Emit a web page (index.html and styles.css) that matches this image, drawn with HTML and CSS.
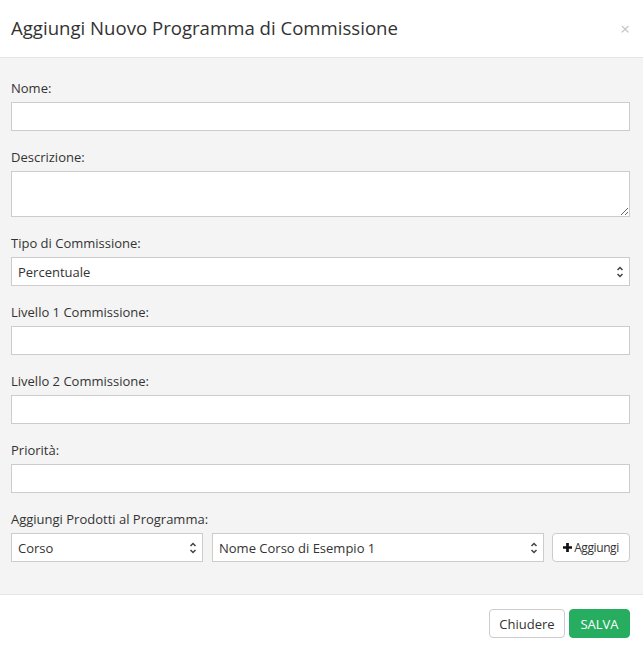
FILE: index.html
```html
<!DOCTYPE html>
<html lang="it">
<head>
<meta charset="utf-8">
<title>Aggiungi Nuovo Programma di Commissione</title>
<link rel="stylesheet" href="styles.css">
</head>
<body>
<div class="modal">
  <div class="modal-header">
    <h4 class="modal-title">Aggiungi Nuovo Programma di Commissione</h4>
    <button class="close" type="button">&times;</button>
  </div>
  <div class="modal-body">
    <div class="form-group">
      <label class="label">Nome:</label>
      <input class="control" type="text">
    </div>
    <div class="form-group">
      <label class="label">Descrizione:</label>
      <textarea class="control textarea"></textarea>
    </div>
    <div class="form-group">
      <label class="label">Tipo di Commissione:</label>
      <select class="control select"><option>Percentuale</option></select>
    </div>
    <div class="form-group">
      <label class="label">Livello 1 Commissione:</label>
      <input class="control" type="text">
    </div>
    <div class="form-group">
      <label class="label">Livello 2 Commissione:</label>
      <input class="control" type="text">
    </div>
    <div class="form-group">
      <label class="label">Priorità:</label>
      <input class="control" type="text">
    </div>
    <div class="form-group">
      <label class="label">Aggiungi Prodotti al Programma:</label>
      <div class="product-row">
        <select class="control select type-select"><option>Corso</option></select>
        <select class="control select item-select"><option>Nome Corso di Esempio 1</option></select>
        <button class="btn btn-add" type="button"><svg class="plus" viewBox="0 0 10 10" width="9" height="9"><path d="M3.5 0h3v3.5H10v3H6.5V10h-3V6.5H0v-3h3.5z" fill="#111"/></svg>Aggiungi</button>
      </div>
    </div>
  </div>
  <div class="modal-footer">
    <button class="btn btn-default" type="button">Chiudere</button>
    <button class="btn btn-success" type="button">SALVA</button>
  </div>
</div>
</body>
</html>
```
FILE: styles.css
```css
* { box-sizing: border-box; }
html, body { margin: 0; padding: 0; }
body {
  font-family: "Open Sans", "Noto Sans", "Liberation Sans", sans-serif;
  color: #333;
  background: #fff;
  width: 643px;
  height: 649px;
  overflow: hidden;
}
.modal { width: 643px; }
.modal-header {
  height: 58px;
  border-bottom: 1px solid #e5e5e5;
  display: flex;
  align-items: center;
  justify-content: space-between;
  padding: 0 13px 1px 11px;
  background: #fff;
}
.modal-title {
  margin: 0;
  font-size: 18.6px;
  font-weight: 400;
  color: #333;
  line-height: 24px;
}
.close {
  border: 0;
  background: none;
  padding: 0;
  font-family: "Open Sans", sans-serif;
  font-size: 17px;
  line-height: 1;
  color: #c4c4c4;
  margin-right: 0;
}
.modal-body {
  background: #f4f4f4;
  padding: 21px 13px 15px 11px;
}
.form-group { margin-bottom: 17px; }
.label {
  display: block;
  font-size: 13px;
  line-height: 18px;
  margin-bottom: 5px;
  color: #333;
}
.control {
  display: block;
  width: 100%;
  height: 29px;
  border: 1px solid #ccc;
  border-radius: 0;
  background: #fff;
  font-family: "Open Sans", "Noto Sans", sans-serif;
  font-size: 13px;
  color: #333;
  padding: 0 6px;
  margin: 0;
  outline: none;
}
.textarea {
  height: 46px;
  resize: vertical;
}
.select {
  -webkit-appearance: none;
  appearance: none;
  background-image: url("data:image/svg+xml;utf8,<svg xmlns='http://www.w3.org/2000/svg' width='8' height='14' viewBox='0 0 8 14'><path d='M1.5 5 L4 2.5 L6.5 5' fill='none' stroke='%23444' stroke-width='1.5'/><path d='M1.5 9 L4 11.5 L6.5 9' fill='none' stroke='%23444' stroke-width='1.5'/></svg>");
  background-repeat: no-repeat;
  background-position: right 5px center;
  background-size: 8px 14px;
}
.product-row {
  display: flex;
  align-items: center;
}
.type-select { width: 192px; flex: none; }
.item-select { width: 332px; flex: none; margin-left: 9px; }
.btn {
  font-family: "Open Sans", "Noto Sans", sans-serif;
  border-radius: 4px;
  height: 29px;
  cursor: pointer;
  display: inline-flex;
  align-items: center;
  justify-content: center;
}
.btn-add {
  margin-left: 8px;
  width: 78px;
  flex: none;
  background: #fff;
  border: 1px solid #ccc;
  font-size: 12px;
  color: #333;
  padding: 0;
  letter-spacing: -0.4px;
}
.plus { margin-right: 2px; }
.modal-footer {
  border-top: 1px solid #e5e5e5;
  background: #fff;
  padding: 14px 13px 11px;
  display: flex;
  justify-content: flex-end;
  gap: 4px;
}
.btn-default {
  width: 76px;
  background: #fff;
  border: 1px solid #ccc;
  color: #333;
  font-size: 13px;
}
.btn-success {
  width: 61px;
  background: #26ad5f;
  border: 1px solid #26ad5f;
  color: #fff;
  font-size: 13px;
}
```
